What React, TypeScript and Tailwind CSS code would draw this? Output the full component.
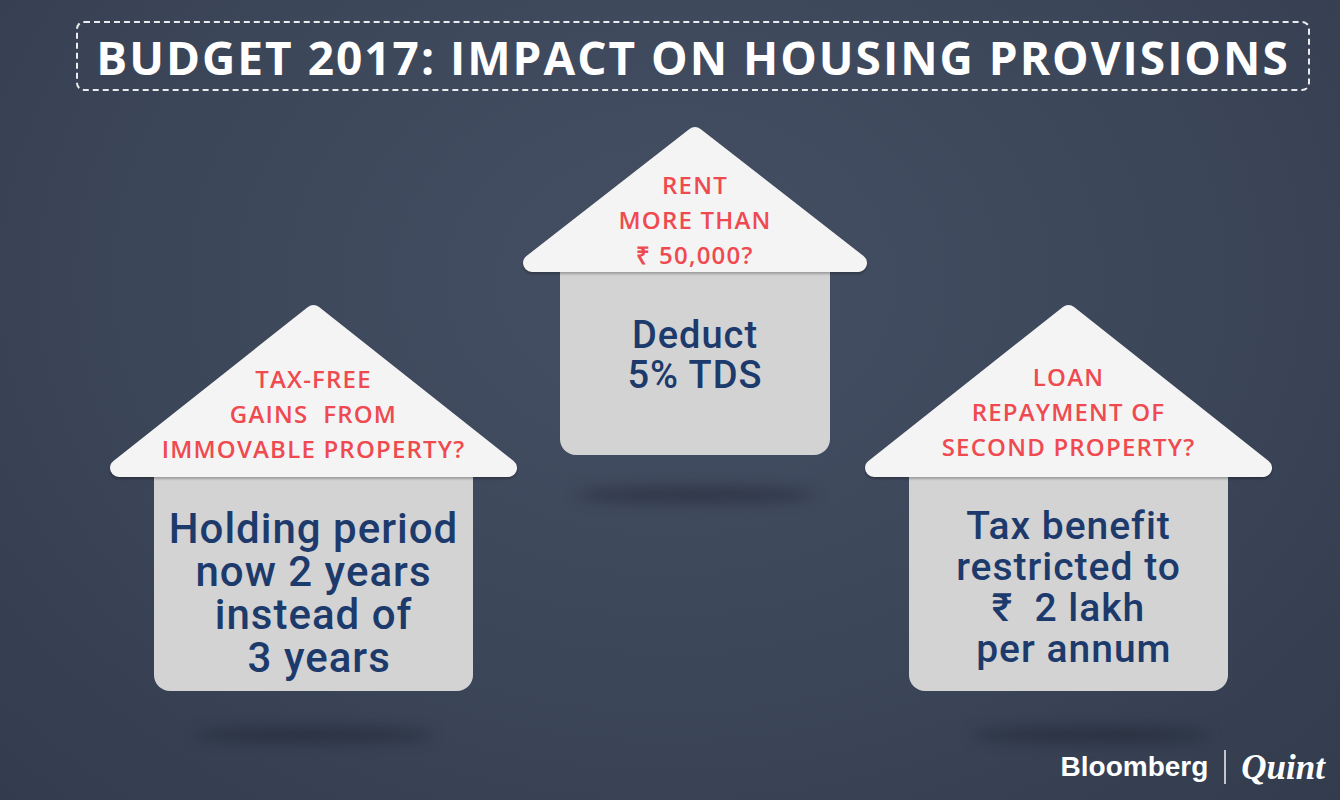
import React from "react"

type House = {
  roofW: number
  roofH: number
  bodyW: number
  bodyH: number
  roofPt: string
  bodyPt: string
  bodyText: string
  bodyLeading: string
  question: string[]
  answer: string[]
  shadowMt: string
  shadowShift: string
}

/** Rounded triangle roof drawn as svg, question text sits over it */
function Roof({ w, h, children, pt }: { w: number; h: number; children: React.ReactNode; pt: string }) {
  const r = 9
  return (
    <div className="relative shrink-0" style={{ width: w, height: h }}>
      <svg
        className="absolute inset-0 drop-shadow-[0_2px_1px_rgba(0,0,0,0.25)]"
        width={w}
        height={h}
        viewBox={`0 0 ${w} ${h}`}
      >
        <polygon
          points={`${r},${h - r} ${w / 2},${r} ${w - r},${h - r}`}
          fill="#f4f4f4"
          stroke="#f4f4f4"
          strokeWidth={r * 2}
          strokeLinejoin="round"
        />
      </svg>
      <div className={`relative flex flex-col items-center ${pt}`}>{children}</div>
    </div>
  )
}

function HouseCard({ house }: { house: House }) {
  return (
    <div className="flex flex-col items-center">
      <Roof w={house.roofW} h={house.roofH} pt={house.roofPt}>
        {house.question.map((q) => (
          <span
            key={q}
            className="whitespace-pre font-['Open_Sans',sans-serif] text-[24px] font-semibold leading-[35px] tracking-[1.2px] text-[#ef4a50]"
          >
            {q}
          </span>
        ))}
      </Roof>
      <div
        className={`flex shrink-0 flex-col items-center rounded-b-[16px] bg-[#d3d3d3] ${house.bodyPt}`}
        style={{ width: house.bodyW, height: house.bodyH }}
      >
        {house.answer.map((a) => (
          <span
            key={a}
            className={`whitespace-pre font-['Roboto',sans-serif] font-medium tracking-[1px] text-[#1d3a6c] ${house.bodyText} ${house.bodyLeading}`}
          >
            {a}
          </span>
        ))}
      </div>
      <div
        className={`h-[16px] w-[240px] shrink-0 rounded-[50%] bg-[#1a202b]/45 blur-[7px] ${house.shadowMt} ${house.shadowShift}`}
      />
    </div>
  )
}

const left: House = {
  roofW: 407,
  roofH: 172,
  bodyW: 319,
  bodyH: 214,
  roofPt: "pt-[56px]",
  bodyPt: "pt-[30px]",
  bodyText: "text-[42px]",
  bodyLeading: "leading-[43px]",
  question: ["TAX-FREE", "GAINS  FROM", "IMMOVABLE PROPERTY?"],
  answer: ["Holding period", "now 2 years", "instead of", " 3 years"],
  shadowMt: "mt-[36px]",
  shadowShift: "",
}

const middle: House = {
  roofW: 344,
  roofH: 145,
  bodyW: 270,
  bodyH: 183,
  roofPt: "pt-[40px]",
  bodyPt: "pt-[43px]",
  bodyText: "text-[38px]",
  bodyLeading: "leading-[40px]",
  question: ["RENT", "MORE THAN", "₹ 50,000?"],
  answer: ["Deduct", "5% TDS"],
  shadowMt: "mt-[32px]",
  shadowShift: "",
}

const right: House = {
  roofW: 407,
  roofH: 172,
  bodyW: 319,
  bodyH: 214,
  roofPt: "pt-[29px]",
  bodyPt: "pt-[29px]",
  bodyText: "text-[39px]",
  bodyLeading: "leading-[41px]",
  question: ["LOAN", "REPAYMENT OF", "SECOND PROPERTY?"],
  answer: ["Tax benefit", "restricted to", "₹  2 lakh", " per annum"],
  shadowMt: "mt-[36px]",
  shadowShift: "ml-[44px]",
}
right.roofPt = "pt-[54px]"

export default function App() {
  return (
    <div className="flex h-[800px] w-[1340px] flex-col overflow-hidden bg-[radial-gradient(ellipse_at_50%_35%,#444f64_0%,#3d475a_50%,#323c4d_100%)]">
      <div className="ml-[76px] mt-[21px] flex h-[70px] w-[1234px] shrink-0 items-center justify-center rounded-[8px] border-2 border-dashed border-white/90">
        <h1 className="pt-[2px] font-['Open_Sans',sans-serif] text-[46px] font-bold leading-none tracking-[2px] text-white">
          BUDGET 2017: IMPACT ON HOUSING PROVISIONS
        </h1>
      </div>

      <div className="flex shrink-0 items-start">
        <div className="ml-[110px] mt-[214px]">
          <HouseCard house={left} />
        </div>
        <div className="ml-[6px] mt-[36px]">
          <HouseCard house={middle} />
        </div>
        <div className="-ml-[2px] mt-[214px]">
          <HouseCard house={right} />
        </div>
      </div>

      <div className="mt-[4px] flex h-[40px] shrink-0 items-center justify-end pr-[15px] leading-none">
        <span className="font-['Liberation_Sans',Arial,sans-serif] text-[28px] font-bold text-white">Bloomberg</span>
        <span className="ml-[16px] h-[34px] w-[2px] bg-white/70" />
        <span className="ml-[15px] font-['Liberation_Serif',serif] text-[35px] font-bold italic text-white">Quint</span>
      </div>
    </div>
  )
}
